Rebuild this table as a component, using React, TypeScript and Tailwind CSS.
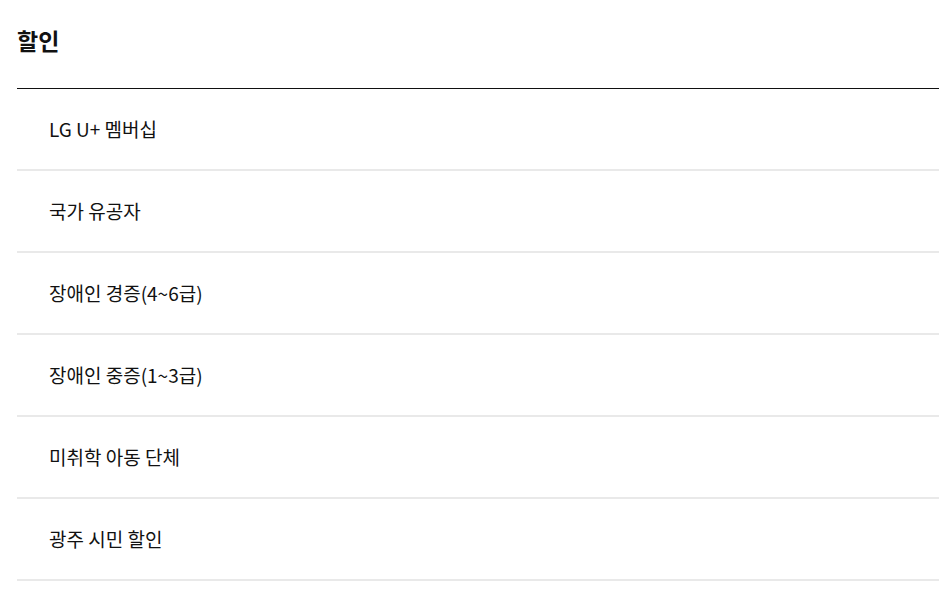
const items = [
  "LG U+ 멤버십",
  "국가 유공자",
  "장애인 경증(4~6급)",
  "장애인 중증(1~3급)",
  "미취학 아동 단체",
  "광주 시민 할인",
];

export default function App() {
  return (
    <div
      className="min-h-screen bg-white pl-[17px] text-[#111]"
      style={{ fontFamily: '"Noto Sans CJK KR", "Noto Sans", sans-serif' }}
    >
      <h2 className="pt-[25px] pb-[33px] text-[23px] leading-[30px] font-bold border-b border-[#111]">
        할인
      </h2>
      <ul>
        {items.map((item) => (
          <li
            key={item}
            className="flex h-[82px] items-center border-b-2 border-[#e9e9e9] pl-[32px] text-[19px]"
          >
            {item}
          </li>
        ))}
      </ul>
    </div>
  );
}
